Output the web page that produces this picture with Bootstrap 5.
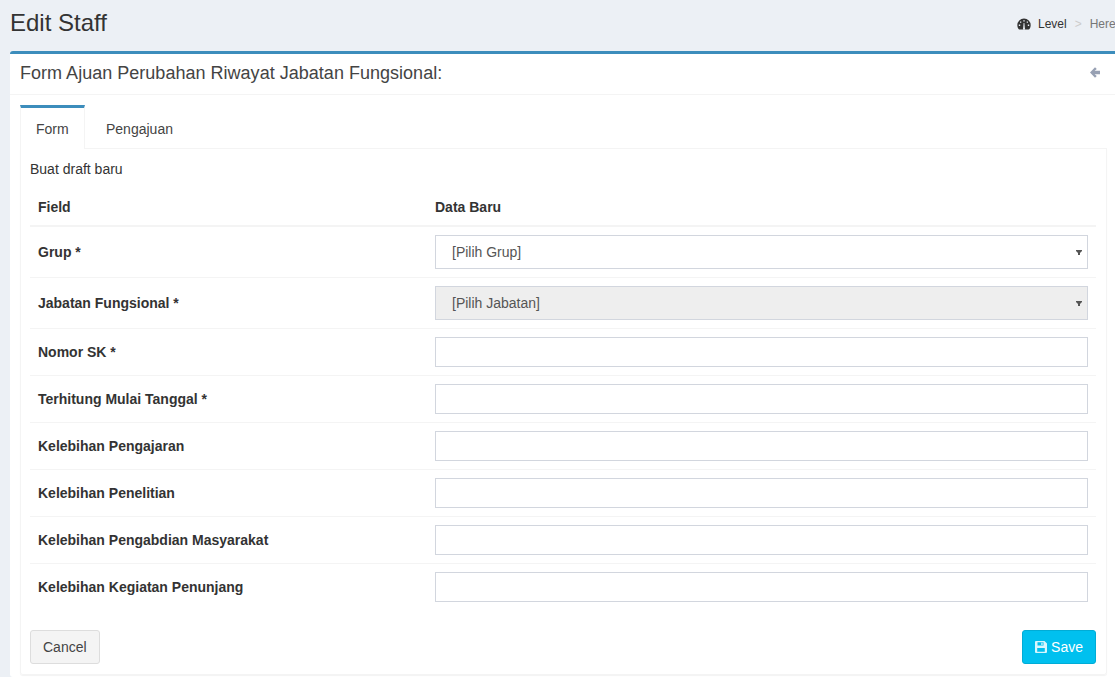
<!DOCTYPE html>
<html lang="en">
<head>
    <meta charset="UTF-8">
    <meta name="viewport" content="width=device-width, initial-scale=1.0">
    <title>Edit Staff</title>
    <link rel="stylesheet" href="https://cdn.jsdelivr.net/npm/bootstrap@5.3.0/dist/css/bootstrap.min.css">
    <style>
        html, body { height: 677px; overflow: hidden; }
        body { background: #ecf0f5; font-family: "Liberation Sans", Arial, sans-serif; font-size: 14px; line-height: 20px; color: #333; }
        .page-head { height: 51px; padding: 0 0 0 10px; }
        .page-head h1 { font-size: 24px; line-height: 26px; margin: 10px 0 0; font-weight: 400; color: #333; }
        .crumbs { font-size: 12px; line-height: 17px; margin-top: 16px; white-space: nowrap; width: 98px; flex: none; }
        .crumbs .sep { color: #ccc; margin: 0 8px; }
        .crumbs .here { color: #777; }
        .crumbs svg { margin-right: 7px; vertical-align: -2px; }
        .main-box { margin-left: 10px; background: #fff; border-top: 3px solid #3c8dbc; border-radius: 3px 0 0 3px; height: 626px; }
        .box-head { height: 41px; padding: 9px 15px 0 10px; border-bottom: 1px solid #f4f4f4; }
        .box-head h3 { font-size: 18px; line-height: 20px; margin: 0; font-weight: 400; color: #444; letter-spacing: .02px; }
        .box-inner { padding: 10px 8px 0 10px; }
        .tab-row { display: flex; height: 44px; border-bottom: 1px solid #f4f4f4; }
        .tab-item { color: #444; height: 44px; text-decoration: none; }
        .tab-item.on { border-top: 3px solid #3c8dbc; border-left: 1px solid #f4f4f4; border-right: 1px solid #f4f4f4; background: #fff; padding: 11px 15px 0; width: 65px; }
        .tab-item.off { padding: 14px 21px 0; }
        .tab-body { border: 1px solid #f4f4f4; border-top: 0; border-radius: 0 0 3px 3px; padding: 10px 10px 9px 9px; height: 526px; box-shadow: 0 1px 1px rgba(0,0,0,.05); }
        .draft-note { margin-bottom: 0; height: 30px; }
        .form-grid { margin-bottom: 20px; color: #333; }
        .form-grid th, .form-grid td { padding: 8px; vertical-align: middle; border-top: 1px solid #f4f4f4; border-bottom: 0; font-size: 14px; line-height: 20px; }
        .form-grid thead th { border-top: 0; border-bottom: 2px solid #f4f4f4; height: 37px; padding: 8px; }
        .form-grid th.label-col { width: 397px; }
        .field-box { height: 30px; border: 1px solid #d2d6de; border-radius: 0; padding: 6px 12px; font-size: 14px; box-shadow: none; }
        select.field-box { height: 34px; padding: 6px 16px; color: #555; border-color: #d2d6de; background-position: right 5px center; background-size: 6px 5px;
            background-image: url("data:image/svg+xml,%3csvg xmlns='http://www.w3.org/2000/svg' viewBox='0 0 6 5'%3e%3cpath fill='%23555' d='M0 0h6v1L4 3v2H2V3L0 1z'/%3e%3c/svg%3e"); }
        select.field-box:disabled { background-color: #eee; color: #555; }
        .btn-plain { background: #f4f4f4; border: 1px solid #ddd; color: #444; border-radius: 3px; font-size: 14px; line-height: 20px; padding: 6px 12px; }
        .btn-save { background: #00c0ef; border: 1px solid #00acd6; color: #fff; border-radius: 3px; font-size: 14px; line-height: 20px; padding: 6px 12px; }
        .btn-save svg { vertical-align: -1px; }
    </style>
</head>
<body>
    <div class="page-head d-flex justify-content-between">
        <h1>Edit Staff</h1>
        <div class="crumbs">
            <svg width="14" height="12" viewBox="0 0 14 12"><path fill="#333" fill-rule="evenodd" d="M7 .5A6.700 6.700 0 0 0 .3 7.200c0 1.400.4 2.700 1.200 3.800.2.3.5.5.8.5h9.400c.3 0 .6-.2.8-.5.8-1.100 1.200-2.400 1.200-3.800A6.700 6.700 0 0 0 7 .5zM6.300 2.200h1.400v1.400H6.300zM3 3.400h1.300v1.300H3zM9.700 3.400H11v1.300H9.700zM1.800 6.600h1.400V8H1.800zM10.800 6.600h1.400V8h-1.400zM6.200 9.800 6.600 5h.8l.4 4.800a1 1 0 1 1-1.600 0z"/></svg><span>Level</span><span class="sep">&gt;</span><span class="here">Here</span>
        </div>
    </div>

    <div class="main-box">
        <div class="box-head d-flex justify-content-between">
            <h3>Form Ajuan Perubahan Riwayat Jabatan Fungsional:</h3>
            <svg class="mt-1" width="10" height="11" viewBox="0 0 10 11"><path fill="#97a0b3" d="M5 .2 6.800 2 4.600 3.700H10v3.600H4.600L6.800 9 5 10.800 0 5.500z"/></svg>
        </div>
        <div class="box-inner">
            <div class="tab-row">
                <a class="tab-item on" href="#">Form</a>
                <a class="tab-item off" href="#">Pengajuan</a>
            </div>
            <div class="tab-body">
                <p class="draft-note">Buat draft baru</p>
                <table class="table form-grid">
                    <thead>
                        <tr><th class="label-col">Field</th><th>Data Baru</th></tr>
                    </thead>
                    <tbody>
                        <tr>
                            <th>Grup *</th>
                            <td><select class="form-select field-box"><option>[Pilih Grup]</option></select></td>
                        </tr>
                        <tr>
                            <th>Jabatan Fungsional *</th>
                            <td><select class="form-select field-box" disabled><option>[Pilih Jabatan]</option></select></td>
                        </tr>
                        <tr><th>Nomor SK *</th><td><input type="text" class="form-control field-box"></td></tr>
                        <tr><th>Terhitung Mulai Tanggal *</th><td><input type="text" class="form-control field-box"></td></tr>
                        <tr><th>Kelebihan Pengajaran</th><td><input type="text" class="form-control field-box"></td></tr>
                        <tr><th>Kelebihan Penelitian</th><td><input type="text" class="form-control field-box"></td></tr>
                        <tr><th>Kelebihan Pengabdian Masyarakat</th><td><input type="text" class="form-control field-box"></td></tr>
                        <tr><th>Kelebihan Kegiatan Penunjang</th><td><input type="text" class="form-control field-box"></td></tr>
                    </tbody>
                </table>
                <div class="d-flex justify-content-between">
                    <button type="button" class="btn btn-plain">Cancel</button>
                    <button type="button" class="btn btn-save">
                        <svg width="12" height="12" viewBox="0 0 12 12"><path fill="#fff" fill-opacity=".85" fill-rule="evenodd" d="M1 0h8.500L12 2.500V11a1 1 0 0 1-1 1H1a1 1 0 0 1-1-1V1a1 1 0 0 1 1-1zM2.500 1.300V4.500h6V1.300zM6.300 1.800h1.300v2.200H6.300zM2.200 7v3.700h7.600V7z"/></svg>
                        Save
                    </button>
                </div>
            </div>
        </div>
    </div>

    <script src="https://cdn.jsdelivr.net/npm/bootstrap@5.3.0/dist/js/bootstrap.bundle.min.js"></script>
</body>
</html>
